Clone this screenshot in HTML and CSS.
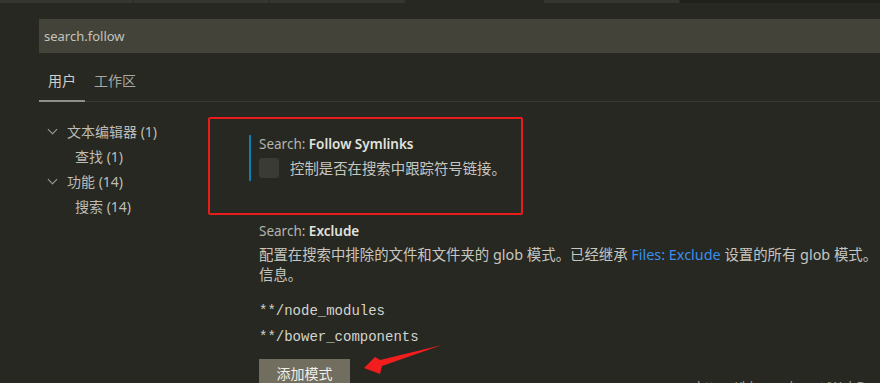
FILE: index.html
```html
<!DOCTYPE html>
<html lang="zh-CN">
<head>
  <meta charset="UTF-8">
  <meta name="viewport" content="width=device-width, initial-scale=1.0">
  <title>设置</title>
  <link rel="stylesheet" href="styles.css">
</head>
<body>
  <div class="editor-tabs">
    <div class="editor-tab"></div>
    <div class="editor-tab"></div>
    <div class="editor-tab"></div>
    <div class="editor-tab active"></div>
    <div class="editor-tab"></div>
    <div class="editor-tab empty"></div>
  </div>

  <div class="settings">
    <div class="search-box">search.follow</div>

    <div class="scope-tabs">
      <div class="scope-tab active">用户</div>
      <div class="scope-tab">工作区</div>
    </div>

    <div class="settings-body">
      <div class="toc">
        <div class="toc-row"><span class="chevron"></span>文本编辑器 (1)</div>
        <div class="toc-row child">查找 (1)</div>
        <div class="toc-row"><span class="chevron"></span>功能 (14)</div>
        <div class="toc-row child">搜索 (14)</div>
      </div>

      <div class="setting-list">
        <div class="highlight-box">
          <div class="setting focused">
            <div class="setting-title">Search: <b>Follow Symlinks</b></div>
            <div class="setting-check">
              <span class="checkbox"></span>
              <span>控制是否在搜索中跟踪符号链接。</span>
            </div>
          </div>
        </div>

        <div class="setting exclude">
          <div class="setting-title">Search: <b>Exclude</b></div>
          <div class="setting-desc">配置在搜索中排除的文件和文件夹的 glob 模式。已经继承 <span class="link">Files: Exclude</span> 设置的所有 glob 模式。<br>信息。</div>
          <div class="patterns">
            <div class="pattern">**/node_modules</div>
            <div class="pattern">**/bower_components</div>
          </div>
          <button class="add-pattern">添加模式</button>
        </div>
      </div>
    </div>
  </div>

  <svg class="arrow" width="90" height="40" viewBox="360 340 90 40">
    <polygon points="364,368 375,357 380,360 442,345 382,366 380,374" fill="#f21d1d"/>
  </svg>

  <div class="watermark">https://blog.csdn.net/WebDeptime</div>
</body>
</html>
```

FILE: styles.css
```css
* {
  margin: 0;
  padding: 0;
  box-sizing: border-box;
}

body {
  font-family: 'Noto Sans', 'Noto Sans CJK SC', sans-serif;
  font-size: 14px;
  background-color: #272822;
  color: #c6c6c0;
  width: 880px;
  height: 383px;
  overflow: hidden;
  position: relative;
}

.editor-tabs {
  display: flex;
  height: 3px;
}

.editor-tab {
  width: 136px;
  background-color: #363631;
  border-right: 1px solid #272822;
}

.editor-tab:first-child {
  width: 134px;
}

.editor-tab.active {
  width: 138px;
  background-color: #272822;
}

.editor-tab.empty {
  flex-grow: 1;
  background-color: #1f1f1c;
  border-right: none;
}

.settings {
  padding-left: 39px;
}

.search-box {
  margin-top: 16px;
  height: 34px;
  background-color: #43433a;
  color: #c4c4bc;
  padding-left: 5px;
  line-height: 34px;
  font-size: 13px;
}

.scope-tabs {
  display: flex;
  padding-top: 13px;
  border-bottom: 1px solid #393933;
}

.scope-tab {
  padding: 0 9px 4px;
  line-height: 30px;
  border-bottom: 2px solid transparent;
  margin-bottom: -1px;
  color: #a8a8a0;
}

.scope-tab.active {
  color: #d0d0c8;
  border-bottom-color: #8f8f88;
}

.settings-body {
  display: flex;
}

.toc {
  width: 169px;
  padding-top: 17px;
}

.toc-row {
  height: 25px;
  line-height: 25px;
  display: flex;
  align-items: center;
  padding-left: 9px;
  color: #bdbdb5;
}

.toc-row.child {
  padding-left: 36px;
}

.chevron {
  width: 7px;
  height: 7px;
  border-right: 1px solid #a0a098;
  border-bottom: 1px solid #a0a098;
  transform: rotate(45deg);
  margin: -4px 11px 0 1px;
}

.setting-list {
  flex-grow: 1;
}

.highlight-box {
  width: 315px;
  height: 98px;
  margin-top: 15px;
  border: 2px solid #ea1c1a;
  border-radius: 2px;
  padding: 16px 0 0 39px;
}

.setting {
  padding-left: 8px;
}

.setting.focused {
  border-left: 2px solid #0e7fb0;
  padding-bottom: 3px;
}

.setting-title {
  line-height: 18px;
  color: #b4b4ac;
  font-size: 13.5px;
}

.setting-title b {
  color: #e2e2dc;
  font-weight: 600;
}

.setting-check {
  display: flex;
  align-items: center;
  margin-top: 4px;
  gap: 11px;
  color: #c6c6c0;
  font-size: 14.4px;
}

.checkbox {
  width: 20px;
  height: 20px;
  border-radius: 3px;
  background-color: #3b3b35;
}

.setting.exclude {
  padding-left: 51px;
  margin-top: 7px;
}

.setting-desc {
  margin-top: 5px;
  line-height: 20px;
  font-size: 14.4px;
  white-space: nowrap;
}

.link {
  color: #3b8eea;
}

.patterns {
  margin-top: 13px;
}

.pattern {
  font-family: 'Liberation Mono', monospace;
  font-size: 14px;
  line-height: 26px;
  color: #d4d4ce;
}

.add-pattern {
  margin-top: 9px;
  width: 91px;
  height: 28px;
  border: none;
  background-color: #726e5f;
  color: #f0f0ea;
  font-family: inherit;
  font-size: 14px;
}

.arrow {
  position: absolute;
  left: 360px;
  top: 340px;
}

.watermark {
  position: absolute;
  left: 697px;
  top: 377px;
  font-size: 13px;
  color: #9a9a94;
  white-space: nowrap;
}
```
